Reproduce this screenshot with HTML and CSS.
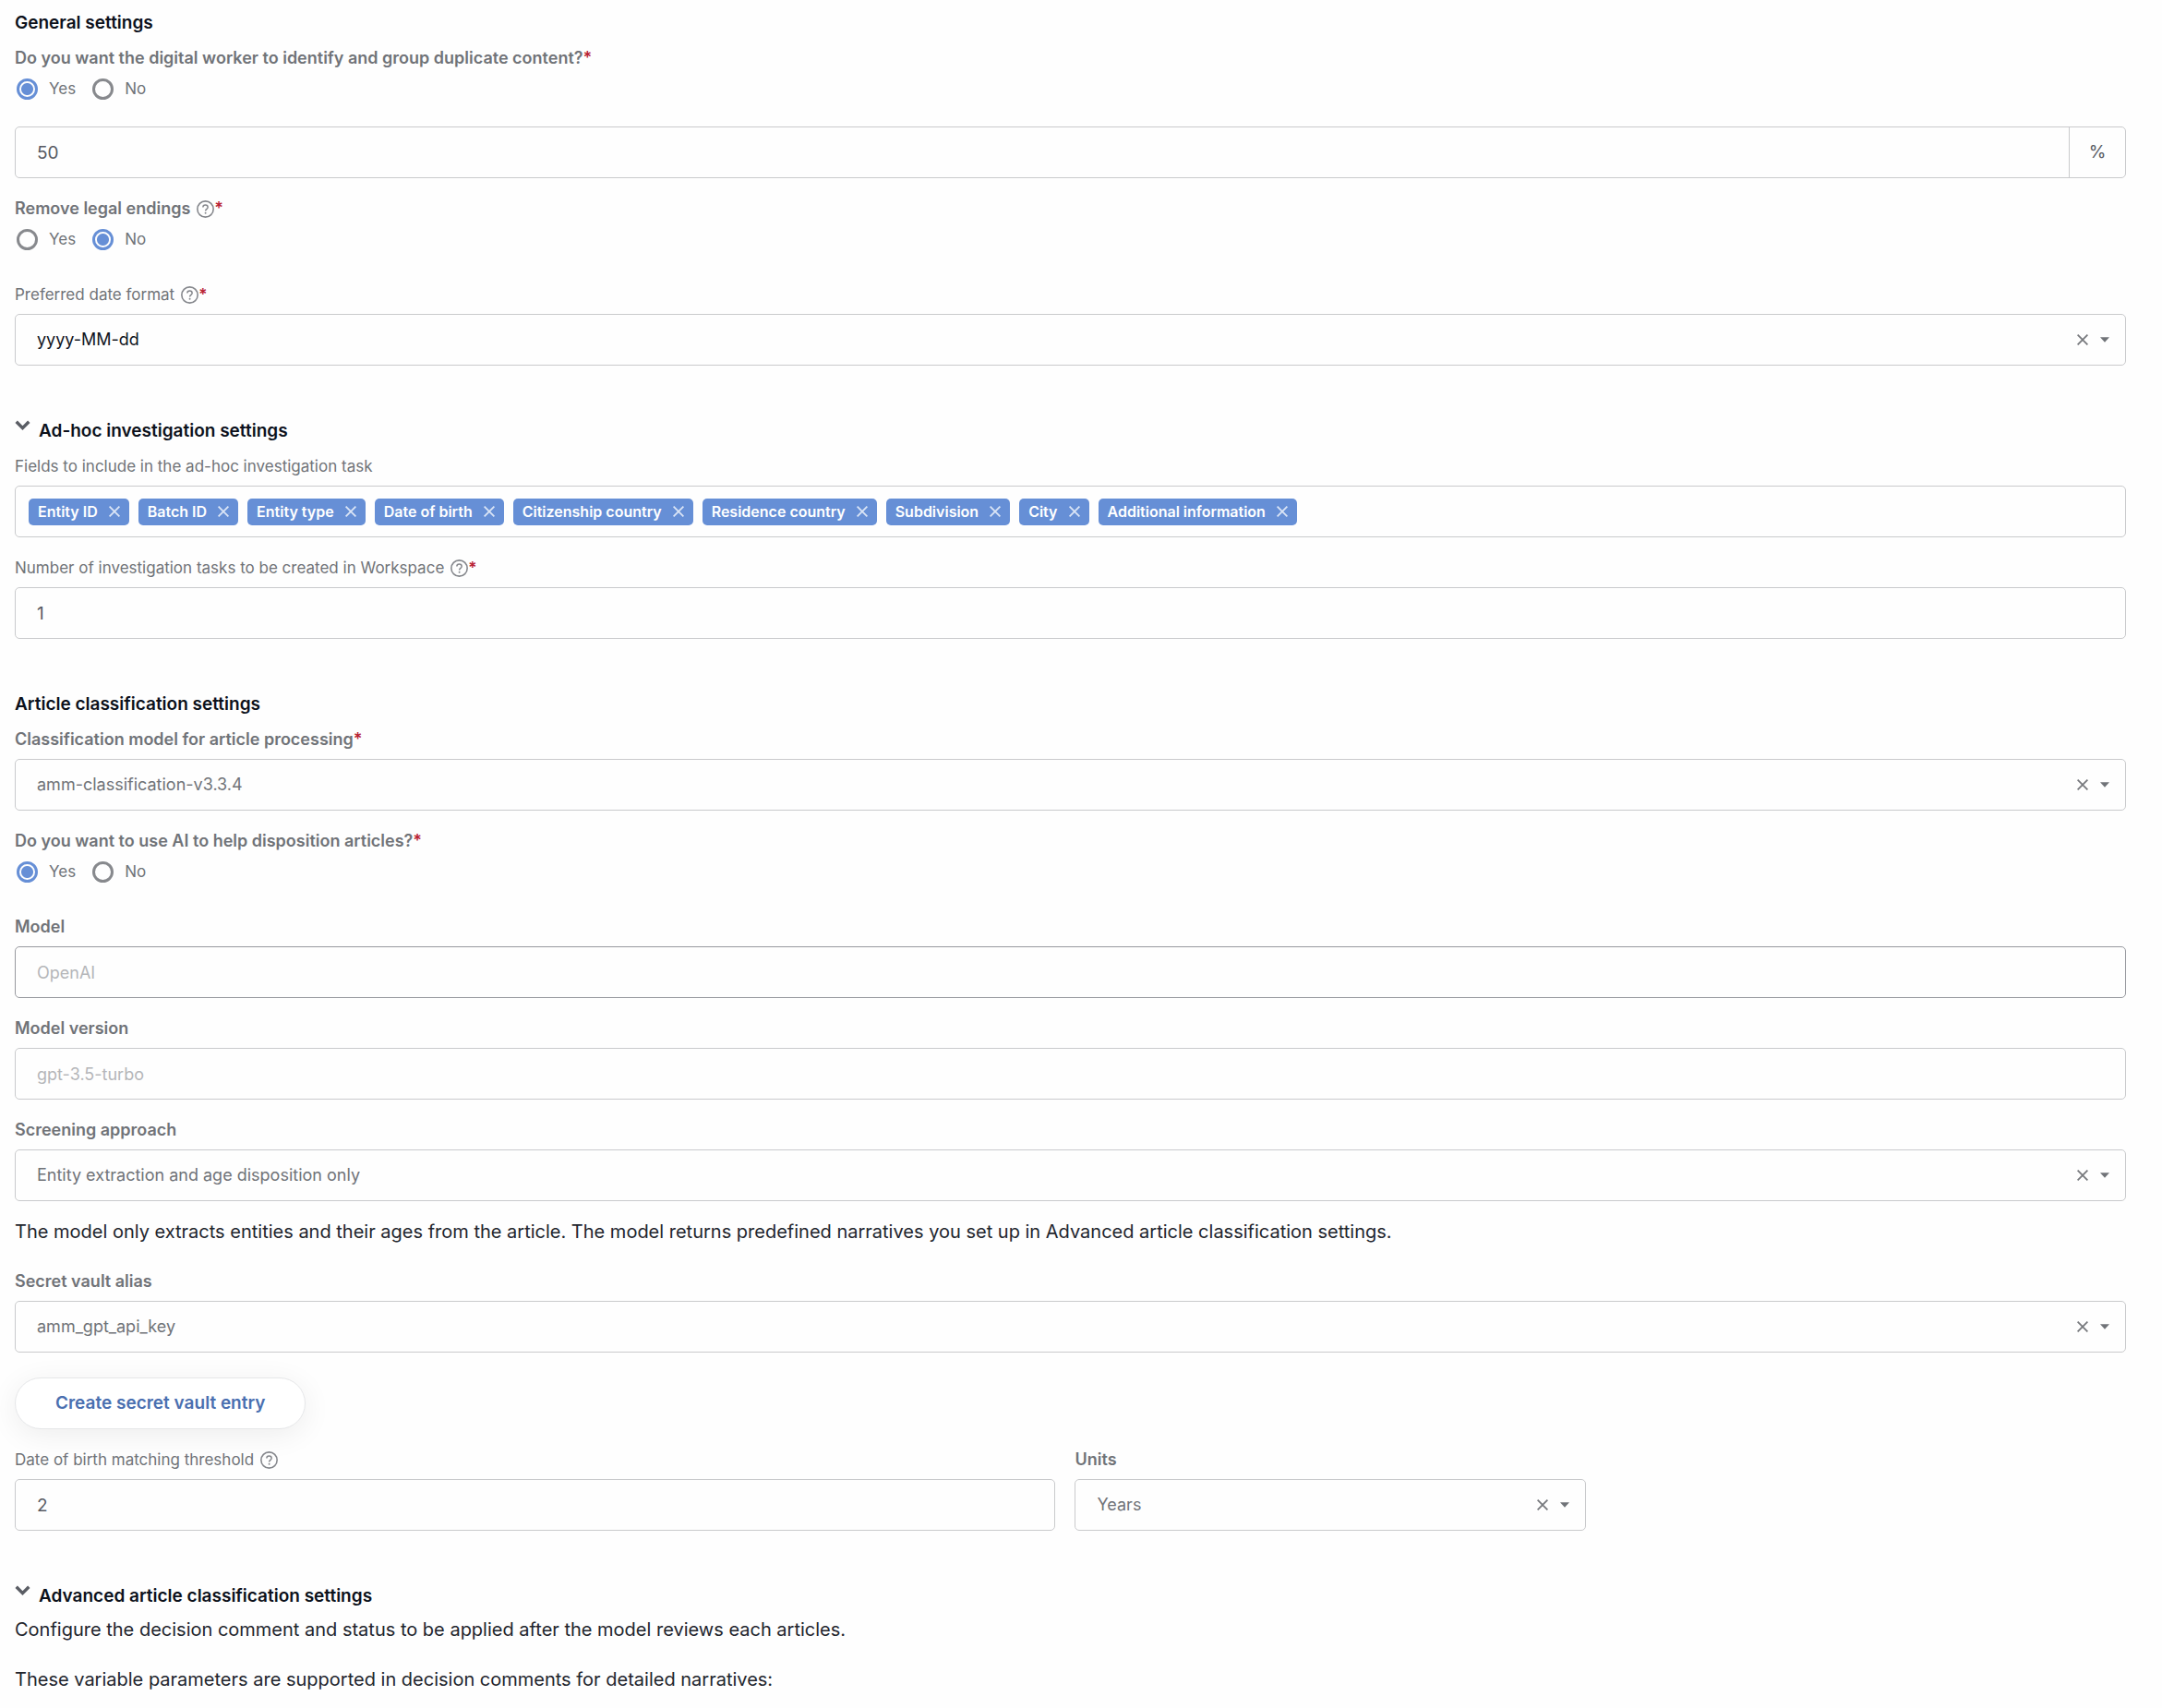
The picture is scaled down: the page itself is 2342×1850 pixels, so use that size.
FILE: index.html
```
<!DOCTYPE html>
<html lang="en">
  <head>
    <meta charset="UTF-8" />
    <meta name="viewport" content="width=device-width, initial-scale=1.0" />
    <title>Settings</title>
    <link rel="stylesheet" href="styles.css" />
  </head>
  <body>
    <!-- Shared icons -->
    <svg class="sprite" aria-hidden="true">
      <symbol id="icon-help" viewBox="0 0 18 18">
        <circle cx="9" cy="9" r="8.2" fill="none" stroke="currentColor" stroke-width="1.5" />
        <path d="M6.5 7.2c0-1.5 1.1-2.4 2.5-2.4s2.5.9 2.5 2.2c0 1.8-2.4 1.9-2.4 3.9" fill="none" stroke="currentColor" stroke-width="1.4" />
        <circle cx="9.1" cy="13" r="0.9" fill="currentColor" />
      </symbol>
      <symbol id="icon-close" viewBox="0 0 12 12">
        <path d="M0.6 0.6l10.8 10.8M11.4 0.6L0.6 11.4" fill="none" stroke="currentColor" stroke-width="1.8" />
      </symbol>
      <symbol id="icon-caret" viewBox="0 0 10 6">
        <path d="M0 0.3h10L5 5.7z" fill="currentColor" />
      </symbol>
      <symbol id="icon-chevron" viewBox="0 0 16 12">
        <path d="M1.2 1.8L8 8.7l6.8-6.9" fill="none" stroke="currentColor" stroke-width="3.4" />
      </symbol>
    </svg>

    <form class="settings">
      <section class="section">
        <h2 class="section-title">General settings</h2>

        <fieldset class="field radio-field compact">
          <legend class="label strong">Do you want the digital worker to identify and group duplicate content?<span class="required">*</span></legend>
          <div class="radios">
            <label class="radio"><input type="radio" name="duplicates" checked />Yes</label>
            <label class="radio"><input type="radio" name="duplicates" />No</label>
          </div>
        </fieldset>

        <div class="field">
          <div class="control">
            <input class="value dark" type="text" value="50" aria-label="Similarity threshold" />
            <span class="addon">%</span>
          </div>
        </div>

        <fieldset class="field radio-field">
          <legend class="label strong">Remove legal endings <svg class="help"><use href="#icon-help" /></svg><span class="required">*</span></legend>
          <div class="radios">
            <label class="radio"><input type="radio" name="endings" />Yes</label>
            <label class="radio"><input type="radio" name="endings" checked />No</label>
          </div>
        </fieldset>

        <div class="field">
          <label class="label" for="date-format">Preferred date format <svg class="help"><use href="#icon-help" /></svg><span class="required">*</span></label>
          <div class="control">
            <select class="value black" id="date-format"><option>yyyy-MM-dd</option></select>
            <button class="clear" type="button" aria-label="Clear"><svg><use href="#icon-close" /></svg></button>
            <svg class="caret"><use href="#icon-caret" /></svg>
          </div>
        </div>
      </section>

      <section class="section">
        <h2 class="section-title">
          <button class="toggle" type="button" aria-expanded="true">
            <svg class="chevron"><use href="#icon-chevron" /></svg>Ad-hoc investigation settings
          </button>
        </h2>

        <div class="field">
          <span class="label" id="fields-label">Fields to include in the ad-hoc investigation task</span>
          <ul class="control chips" aria-labelledby="fields-label">
            <li class="chip">Entity ID<button type="button" aria-label="Remove"><svg><use href="#icon-close" /></svg></button></li>
            <li class="chip">Batch ID<button type="button" aria-label="Remove"><svg><use href="#icon-close" /></svg></button></li>
            <li class="chip">Entity type<button type="button" aria-label="Remove"><svg><use href="#icon-close" /></svg></button></li>
            <li class="chip">Date of birth<button type="button" aria-label="Remove"><svg><use href="#icon-close" /></svg></button></li>
            <li class="chip">Citizenship country<button type="button" aria-label="Remove"><svg><use href="#icon-close" /></svg></button></li>
            <li class="chip">Residence country<button type="button" aria-label="Remove"><svg><use href="#icon-close" /></svg></button></li>
            <li class="chip">Subdivision<button type="button" aria-label="Remove"><svg><use href="#icon-close" /></svg></button></li>
            <li class="chip">City<button type="button" aria-label="Remove"><svg><use href="#icon-close" /></svg></button></li>
            <li class="chip">Additional information<button type="button" aria-label="Remove"><svg><use href="#icon-close" /></svg></button></li>
          </ul>
        </div>

        <div class="field">
          <label class="label" for="task-count">Number of investigation tasks to be created in Workspace <svg class="help"><use href="#icon-help" /></svg><span class="required">*</span></label>
          <div class="control">
            <input class="value dark" id="task-count" type="text" value="1" />
          </div>
        </div>
      </section>

      <section class="section">
        <h2 class="section-title">Article classification settings</h2>

        <div class="field">
          <label class="label strong" for="classification">Classification model for article processing<span class="required">*</span></label>
          <div class="control">
            <select class="value" id="classification"><option>amm-classification-v3.3.4</option></select>
            <button class="clear" type="button" aria-label="Clear"><svg><use href="#icon-close" /></svg></button>
            <svg class="caret"><use href="#icon-caret" /></svg>
          </div>
        </div>

        <fieldset class="field radio-field">
          <legend class="label strong">Do you want to use AI to help disposition articles?<span class="required">*</span></legend>
          <div class="radios">
            <label class="radio"><input type="radio" name="ai" checked />Yes</label>
            <label class="radio"><input type="radio" name="ai" />No</label>
          </div>
        </fieldset>

        <div class="field">
          <label class="label strong" for="model">Model</label>
          <div class="control active">
            <input class="value" id="model" type="text" placeholder="OpenAI" />
          </div>
        </div>

        <div class="field">
          <label class="label strong" for="model-version">Model version</label>
          <div class="control">
            <input class="value" id="model-version" type="text" placeholder="gpt-3.5-turbo" />
          </div>
        </div>

        <div class="field">
          <label class="label strong" for="approach">Screening approach</label>
          <div class="control">
            <select class="value" id="approach"><option>Entity extraction and age disposition only</option></select>
            <button class="clear" type="button" aria-label="Clear"><svg><use href="#icon-close" /></svg></button>
            <svg class="caret"><use href="#icon-caret" /></svg>
          </div>
          <p class="text hint">The model only extracts entities and their ages from the article. The model returns predefined narratives you set up in Advanced article classification settings.</p>
        </div>

        <div class="field">
          <label class="label strong" for="vault">Secret vault alias</label>
          <div class="control">
            <select class="value" id="vault"><option>amm_gpt_api_key</option></select>
            <button class="clear" type="button" aria-label="Clear"><svg><use href="#icon-close" /></svg></button>
            <svg class="caret"><use href="#icon-caret" /></svg>
          </div>
          <button class="create-button" type="button">Create secret vault entry</button>
        </div>

        <div class="row">
          <div class="field">
            <label class="label" for="threshold">Date of birth matching threshold <svg class="help"><use href="#icon-help" /></svg></label>
            <div class="control">
              <input class="value dark" id="threshold" type="text" value="2" />
            </div>
          </div>
          <div class="field">
            <label class="label strong" for="units">Units</label>
            <div class="control">
              <select class="value" id="units"><option>Years</option></select>
              <button class="clear" type="button" aria-label="Clear"><svg><use href="#icon-close" /></svg></button>
              <svg class="caret"><use href="#icon-caret" /></svg>
            </div>
          </div>
        </div>
      </section>

      <section class="section">
        <h2 class="section-title tight">
          <button class="toggle" type="button" aria-expanded="true">
            <svg class="chevron"><use href="#icon-chevron" /></svg>Advanced article classification settings
          </button>
        </h2>
        <p class="text">Configure the decision comment and status to be applied after the model reviews each articles.</p>
        <p class="text">These variable parameters are supported in decision comments for detailed narratives:</p>
      </section>
    </form>
  </body>
</html>
```
FILE: styles.css
```
* {
  box-sizing: border-box;
}
body {
  margin: 0;
  background: #fefefe;
  color: #707378;
  font-family: Inter, 'Liberation Sans', sans-serif;
  font-size: 17px;
  line-height: 24px;
}
button,
input,
select {
  font: inherit;
  color: inherit;
  margin: 0;
  padding: 0;
  border: 0;
  background: none;
}
.sprite {
  display: none;
}
.settings {
  padding: 11px 39px 0 16px;
}
.section {
  margin-bottom: 57px;
}
.section-title {
  margin: 0 0 12px;
  color: #0c111b;
  font-size: 19px;
  font-weight: 600;
  line-height: 28px;
}
.section-title.tight {
  margin-bottom: 8px;
}
.toggle {
  display: flex;
  gap: 9px;
  align-items: flex-start;
}
.chevron {
  width: 17px;
  height: 12px;
  margin-top: 2px;
  color: #5a5d64;
}
.field {
  min-width: 0;
  margin: 0 0 21px;
  padding: 0;
  border: 0;
}
.section > :last-child {
  margin-bottom: 0;
}
.radio-field {
  margin-bottom: 36px;
}
.radio-field.compact {
  margin-bottom: 29px;
}
.label {
  display: flex;
  align-items: center;
  margin-bottom: 9px;
  padding: 0;
}
.strong {
  font-size: 18px;
  font-weight: 600;
}
.help {
  width: 19px;
  height: 19px;
  margin-left: 7px;
  color: #85878c;
}
.required {
  color: #b92334;
  font-weight: 600;
}
.radios {
  display: flex;
  gap: 18px;
  padding-left: 2px;
}
.radio {
  display: flex;
  align-items: center;
  gap: 12px;
}
.radio input {
  appearance: none;
  width: 23px;
  height: 23px;
  border: 3px solid #87898d;
  border-radius: 50%;
}
.radio input:checked {
  border-color: #668fd6;
  background: radial-gradient(circle, #668fd6 6px, transparent 7px);
}
.control {
  display: flex;
  align-items: center;
  height: 56px;
  border: 1px solid #c9cacc;
  border-radius: 5px;
}
.control.active {
  border-color: #97999e;
}
.value {
  appearance: none;
  flex: 1;
  min-width: 0;
  height: 100%;
  padding: 0 23px;
  outline: none;
  font-size: 18px;
}
.value.dark,
.addon {
  color: #575a62;
  font-size: 19px;
}
.value.black {
  color: #10141d;
}
.value::placeholder {
  color: #b5b6b9;
}
.addon {
  display: flex;
  align-items: center;
  justify-content: center;
  width: 61px;
  height: 100%;
  border-left: 1px solid #c9cacc;
}
.clear {
  display: flex;
  color: #77797d;
}
.clear svg {
  width: 12px;
  height: 12px;
}
.caret {
  width: 10px;
  height: 6px;
  margin: 0 17px 0 13px;
}
.chips {
  gap: 10px;
  margin: 0;
  padding: 0 14px;
  list-style: none;
}
.chip {
  display: flex;
  align-items: center;
  gap: 12px;
  height: 29px;
  padding: 0 10px;
  border-radius: 5px;
  background: #668fd6;
  color: #fff;
  font-size: 16px;
  font-weight: 600;
}
.chip button {
  display: flex;
  color: #dbe5f6;
}
.chip svg {
  width: 12px;
  height: 12px;
}
.text {
  margin: 0 0 26px;
  color: #22252d;
  font-size: 20px;
  line-height: 28px;
}
.hint {
  margin: 19px 0 28px;
}
.create-button {
  margin-top: 27px;
  padding: 0 43px;
  border: 1px solid #e6e7e9;
  border-radius: 28px;
  background: #fff;
  box-shadow: 0 6px 32px rgba(0, 0, 0, 0.07);
  color: #4a6fb0;
  font-size: 19px;
  font-weight: 600;
  line-height: 54px;
}
.row {
  display: grid;
  grid-template-columns: 49.3% 24.2%;
  gap: 21px;
}
.row .field {
  margin-bottom: 0;
}
```
